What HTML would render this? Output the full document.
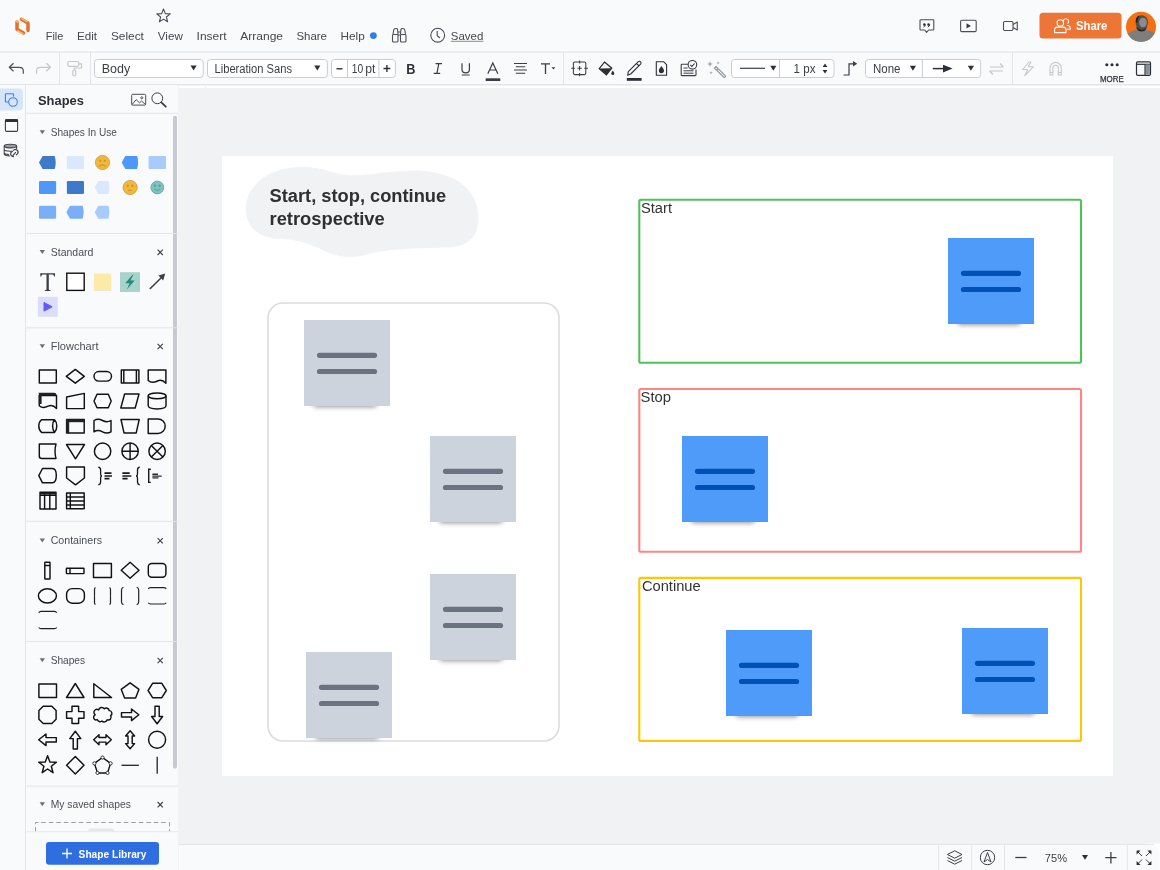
<!DOCTYPE html>
<html><head><meta charset="utf-8">
<style>
*{box-sizing:border-box;margin:0;padding:0}
html,body{width:1160px;height:870px;overflow:hidden;background:#f1f2f4;font-family:"Liberation Sans",sans-serif}
.a{position:absolute}
svg{position:absolute;left:0;top:0;will-change:transform}
text{font-family:"Liberation Sans",sans-serif}
</style></head><body>
<div class="a" style="left:0;top:0;width:1160px;height:85px;background:#f9fafb"></div>
<div class="a" style="left:0;top:51px;width:1160px;height:2px;background:#eceef1"></div>
<div class="a" style="left:0;top:84px;width:1160px;height:1px;background:#e3e5e8"></div>
<div class="a" style="left:59px;top:52px;width:1px;height:32px;background:#e3e5e8"></div>
<div class="a" style="left:90px;top:52px;width:1px;height:32px;background:#e3e5e8"></div>
<div class="a" style="left:563px;top:52px;width:1px;height:32px;background:#e3e5e8"></div>
<div class="a" style="left:1012px;top:52px;width:1px;height:32px;background:#e3e5e8"></div>
<div class="a" style="left:0;top:85px;width:178px;height:785px;background:#f9fafb"></div>
<div class="a" style="left:25px;top:85px;width:1px;height:785px;background:#e3e5e8"></div>
<div class="a" style="left:179px;top:86px;width:26px;height:2px;background:#fff"></div>
<div class="a" style="left:206px;top:86px;width:954px;height:2px;background:#fff"></div>
<div class="a" style="left:222px;top:156px;width:891px;height:620px;background:#fff"></div>
<div class="a" style="left:179px;top:844px;width:981px;height:26px;background:#f9fafb"></div>
<div class="a" style="left:179px;top:844px;width:981px;height:1px;background:#e3e5e8"></div>
<svg width="1160" height="870" viewBox="0 0 1160 870">
<defs><filter id="blur" x="-20%" y="-100%" width="140%" height="300%"><feGaussianBlur stdDeviation="2.4"/></filter></defs>
<path d="M300,167 C322,166 334,175 352,175.5 C372,175 395,170 418,170.5 C458,172 478.5,192 478.5,218 C478.5,238 466,247 448,247.5 C420,248 396,249 376,252 C358,258 342,259.5 325,251 C310,244 298,239.5 280,239 C258,238.5 245.8,226 245.8,209 C245.8,186 268,167.5 300,167 Z" fill="#f1f2f4"/>
<text x="269.5" y="202" font-size="18" fill="#2e3033" font-weight="bold" textLength="176.7" lengthAdjust="spacingAndGlyphs" >Start, stop, continue</text>
<text x="269.5" y="224.7" font-size="18" fill="#2e3033" font-weight="bold" textLength="115.3" lengthAdjust="spacingAndGlyphs" >retrospective</text>
<rect x="268" y="303" width="291" height="438" rx="15" fill="none" stroke="#dcdcdc" stroke-width="1.6"/>
<rect x="313" y="398" width="64" height="9" rx="4" fill="#000" opacity=".42" filter="url(#blur)"/>
<rect x="304" y="320" width="86" height="86" fill="#cdd3dc"/>
<path d="M319.5,355.3 H374.5 M319.5,371.5 H374.5" stroke="#6b7280" stroke-width="5.2" stroke-linecap="round"/>
<rect x="439" y="514" width="64" height="9" rx="4" fill="#000" opacity=".42" filter="url(#blur)"/>
<rect x="430" y="436" width="86" height="86" fill="#cdd3dc"/>
<path d="M445.5,471.3 H500.5 M445.5,487.5 H500.5" stroke="#6b7280" stroke-width="5.2" stroke-linecap="round"/>
<rect x="439" y="652" width="64" height="9" rx="4" fill="#000" opacity=".42" filter="url(#blur)"/>
<rect x="430" y="574" width="86" height="86" fill="#cdd3dc"/>
<path d="M445.5,609.3 H500.5 M445.5,625.5 H500.5" stroke="#6b7280" stroke-width="5.2" stroke-linecap="round"/>
<rect x="315" y="730" width="64" height="9" rx="4" fill="#000" opacity=".42" filter="url(#blur)"/>
<rect x="306" y="652" width="86" height="86" fill="#cdd3dc"/>
<path d="M321.5,687.3 H376.5 M321.5,703.5 H376.5" stroke="#6b7280" stroke-width="5.2" stroke-linecap="round"/>
<rect x="639.3" y="199.7" width="441.7" height="163" rx="1.5" fill="none" stroke="#4fc25a" stroke-width="2.1"/>
<rect x="639.3" y="389" width="441.7" height="162.7" rx="1.5" fill="none" stroke="#ff8585" stroke-width="2.1"/>
<rect x="639.3" y="577.9" width="441.7" height="163" rx="1.5" fill="none" stroke="#fcc803" stroke-width="2.1"/>
<text x="641" y="213.1" font-size="14" fill="#333333" font-weight="normal" textLength="31" lengthAdjust="spacingAndGlyphs" >Start</text>
<text x="640.6" y="402.2" font-size="14" fill="#333333" font-weight="normal" textLength="30.5" lengthAdjust="spacingAndGlyphs" >Stop</text>
<text x="641.9" y="590.7" font-size="14" fill="#333333" font-weight="normal" textLength="58.8" lengthAdjust="spacingAndGlyphs" >Continue</text>
<rect x="957" y="316" width="64" height="9" rx="4" fill="#000" opacity=".42" filter="url(#blur)"/>
<rect x="948" y="238" width="86" height="86" fill="#4e9bfa"/>
<path d="M963.5,273.3 H1018.5 M963.5,289.5 H1018.5" stroke="#0051b3" stroke-width="5.2" stroke-linecap="round"/>
<rect x="691" y="514" width="64" height="9" rx="4" fill="#000" opacity=".42" filter="url(#blur)"/>
<rect x="682" y="436" width="86" height="86" fill="#4e9bfa"/>
<path d="M697.5,471.3 H752.5 M697.5,487.5 H752.5" stroke="#0051b3" stroke-width="5.2" stroke-linecap="round"/>
<rect x="735" y="708" width="64" height="9" rx="4" fill="#000" opacity=".42" filter="url(#blur)"/>
<rect x="726" y="630" width="86" height="86" fill="#4e9bfa"/>
<path d="M741.5,665.3 H796.5 M741.5,681.5 H796.5" stroke="#0051b3" stroke-width="5.2" stroke-linecap="round"/>
<rect x="971" y="706" width="64" height="9" rx="4" fill="#000" opacity=".42" filter="url(#blur)"/>
<rect x="962" y="628" width="86" height="86" fill="#4e9bfa"/>
<path d="M977.5,663.3 H1032.5 M977.5,679.5 H1032.5" stroke="#0051b3" stroke-width="5.2" stroke-linecap="round"/>
<g fill="none" stroke-linecap="round" stroke-linejoin="round"><path d="M17,22 V29.3 L23.6,33" stroke="#e3702c" stroke-width="3.5"/><path d="M21.4,19.3 L28,23 V30.5" stroke="#e3702c" stroke-width="3.5"/><path d="M17.6,30.8 L22.8,33.6 M21.6,18.6 L27,21.6" stroke="#fbb56d" stroke-width="1.6"/><path d="M17,21.4 V22" stroke="#fbb56d" stroke-width="1.8"/></g>
<path d="M163.5,9 L165.3,13.6 L170.2,13.9 L166.4,17 L167.6,21.8 L163.5,19.1 L159.4,21.8 L160.6,17 L156.8,13.9 L161.7,13.6 Z" fill="none" stroke="#4a4e55" stroke-width="1.1" stroke-linejoin="round"/>
<text x="45.7" y="39.7" font-size="11.6" fill="#43474e" font-weight="normal" textLength="17.7" lengthAdjust="spacingAndGlyphs" >File</text>
<text x="77" y="39.7" font-size="11.6" fill="#43474e" font-weight="normal" textLength="20" lengthAdjust="spacingAndGlyphs" >Edit</text>
<text x="110.9" y="39.7" font-size="11.6" fill="#43474e" font-weight="normal" textLength="33" lengthAdjust="spacingAndGlyphs" >Select</text>
<text x="157.8" y="39.7" font-size="11.6" fill="#43474e" font-weight="normal" textLength="25" lengthAdjust="spacingAndGlyphs" >View</text>
<text x="196.6" y="39.7" font-size="11.6" fill="#43474e" font-weight="normal" textLength="30" lengthAdjust="spacingAndGlyphs" >Insert</text>
<text x="240.3" y="39.7" font-size="11.6" fill="#43474e" font-weight="normal" textLength="42.7" lengthAdjust="spacingAndGlyphs" >Arrange</text>
<text x="296.4" y="39.7" font-size="11.6" fill="#43474e" font-weight="normal" textLength="30.6" lengthAdjust="spacingAndGlyphs" >Share</text>
<text x="340.5" y="39.7" font-size="11.6" fill="#43474e" font-weight="normal" textLength="24.2" lengthAdjust="spacingAndGlyphs" >Help</text>
<circle cx="373.4" cy="35.6" r="3.4" fill="#2f7ef0"/>
<g fill="none" stroke="#4a4e55" stroke-width="1.1" stroke-linejoin="round"><rect x="392.5" y="34.5" width="5.5" height="7.5" rx="1"/><rect x="400.5" y="34.5" width="5.5" height="7.5" rx="1"/><path d="M393,34.5 L393.8,29.5 Q394.5,28.5 396,28.5 Q397.3,28.5 397.6,29.5 L398,34.5"/><path d="M400.5,34.5 L400.9,29.5 Q401.2,28.5 402.5,28.5 Q404,28.5 404.7,29.5 L405.5,34.5"/><path d="M398,32 L400.5,32 M398,35 L400.5,35"/></g>
<circle cx="437.7" cy="35.2" r="6.9" fill="none" stroke="#4a4e55" stroke-width="1.1"/><path d="M437.2,31 L437.2,35.8 L440,38" fill="none" stroke="#4a4e55" stroke-width="1.1"/>
<text x="450.8" y="39.6" font-size="11.6" fill="#43474e" font-weight="normal" textLength="32.6" lengthAdjust="spacingAndGlyphs" >Saved</text>
<rect x="450.8" y="40.8" width="32.6" height="1" fill="#8a8e95"/>
<path d="M920.8,19.8 H933 Q933.8,19.8 933.8,20.6 V29.2 Q933.8,30 933,30 H928.6 L926.6,32.4 L924.6,30 H920.8 Q920,30 920,29.2 V20.6 Q920,19.8 920.8,19.8 Z" fill="none" stroke="#4a4e55" stroke-width="1.1" stroke-linejoin="round"/><g fill="#2c3036"><circle cx="924.3" cy="24.4" r="1.25"/><circle cx="928.5" cy="24.4" r="1.25"/></g><path d="M925.4,24.6 Q925.3,26.3 923.6,27.1 M929.6,24.6 Q929.5,26.3 927.8,27.1" fill="none" stroke="#2c3036" stroke-width="1"/>
<rect x="960.6" y="20.2" width="15.6" height="11.4" rx="1.2" fill="none" stroke="#4a4e55" stroke-width="1.1"/><path d="M966.5,23.3 L971,25.9 L966.5,28.5 Z" fill="#3a3e45"/>
<rect x="1003.5" y="21.5" width="9.5" height="9" rx="1.2" fill="none" stroke="#4a4e55" stroke-width="1.1"/><path d="M1013,24.5 L1017.3,22 V30 L1013,27.5" fill="none" stroke="#4a4e55" stroke-width="1.1" stroke-linejoin="round"/>
<rect x="1039.5" y="12.8" width="82" height="25.8" rx="3.5" fill="#ed7535"/>
<g fill="none" stroke="#fff" stroke-width="1.05"><path d="M1063.2,21.2 A2.7,2.7 0 1 1 1067.6,23.6 M1066.8,25.4 H1067.5 Q1070.2,25.4 1070.2,28 V29.3 H1066.6"/><circle cx="1060.3" cy="22.9" r="3.2" fill="#ed7535"/><path d="M1054.6,32.6 V30 Q1054.6,27.1 1057.5,27.1 H1063.2 Q1066,27.1 1066,30 V32.6 Z" fill="#ed7535"/></g>
<text x="1076" y="30.1" font-size="13" fill="#ffffff" font-weight="bold" textLength="31.4" lengthAdjust="spacingAndGlyphs" >Share</text>
<defs><clipPath id="av"><circle cx="1141" cy="26.8" r="15"/></clipPath><filter id="ab"><feGaussianBlur stdDeviation=".7"/></filter></defs><g clip-path="url(#av)"><rect x="1120" y="8" width="40" height="40" fill="#f66f12"/><g filter="url(#ab)"><path d="M1125,34.5 L1135,30 Q1141,28.5 1147,30 L1157,33.5 V46 H1125 Z" fill="#7e7e7e"/><ellipse cx="1141.5" cy="27.5" rx="5" ry="4" fill="#262626"/><ellipse cx="1141.8" cy="22.5" rx="6.2" ry="7.3" fill="#505050"/><ellipse cx="1143" cy="22.5" rx="3.8" ry="4.8" fill="#8c8c8c"/><path d="M1135.8,22 Q1135.5,16 1140,15.5 Q1137.5,17.5 1137.3,23 Z" fill="#1e1e1e"/></g></g>
<path d="M23.3,73.8 V71 Q23.3,67.3 19.5,67.3 H9.5 M13.5,63.3 L9.3,67.3 L13.5,71.3" fill="none" stroke="#4a4e55" stroke-width="1.2" stroke-linejoin="round"/>
<path d="M36.5,73.8 V71 Q36.5,67.3 40.3,67.3 H50.3 M46.3,63.3 L50.5,67.3 L46.3,71.3" fill="none" stroke="#c4c7cc" stroke-width="1.2" stroke-linejoin="round"/>
<g fill="none" stroke="#c4c7cc" stroke-width="1.2"><rect x="67.8" y="61.5" width="11" height="4.8" rx="1.5"/><path d="M78.8,63.8 H81.5 V68 H74.3 V70"/><rect x="72.8" y="70" width="3" height="5.8" rx="1.2"/></g>
<rect x="94.5" y="59.5" width="108.7" height="18" rx="3" fill="#fff" stroke="#c9cdd3"/>
<text x="101.7" y="73" font-size="12.5" fill="#3a3e45" font-weight="normal" >Body</text>
<path d="M190.5,65.5 H196.7 L193.6,70.5 Z" fill="#2c3036"/>
<rect x="207.5" y="59.5" width="119.9" height="18" rx="3" fill="#fff" stroke="#c9cdd3"/>
<text x="214.5" y="72.5" font-size="12" fill="#3a3e45" font-weight="normal" textLength="77.5" lengthAdjust="spacingAndGlyphs" >Liberation Sans</text>
<path d="M314.2,65.5 H320.4 L317.3,70.5 Z" fill="#2c3036"/>
<rect x="331.5" y="59.5" width="63.9" height="18" rx="3" fill="#fff" stroke="#c9cdd3"/>
<path d="M347.5,59.5 V77.5 M378.9,59.5 V77.5" stroke="#c9cdd3"/>
<path d="M336.5,68.8 H342.5" stroke="#2c3036" stroke-width="1.4"/>
<text x="351.7" y="72.8" font-size="12.5" fill="#3a3e45" font-weight="normal" textLength="11.4" lengthAdjust="spacingAndGlyphs" >10</text>
<text x="365.2" y="72.8" font-size="12.5" fill="#3a3e45" font-weight="normal" textLength="10.2" lengthAdjust="spacingAndGlyphs" >pt</text>
<path d="M383.5,68.5 H390.3 M386.9,65.1 V71.9" stroke="#2c3036" stroke-width="1.4"/>
<text x="406.3" y="73.8" font-size="14.5" fill="#2f3339" font-weight="bold" textLength="9.2" lengthAdjust="spacingAndGlyphs" >B</text>
<path d="M435.5,63.6 H442 M433.7,73.4 H440.2 M438.8,63.6 L436.9,73.4" fill="none" stroke="#3a3e45" stroke-width="1.2"/>
<path d="M462,63.3 V69.5 Q462,72.8 465.7,72.8 Q469.4,72.8 469.4,69.5 V63.3 M461.8,75 H469.6" fill="none" stroke="#3a3e45" stroke-width="1.2"/>
<path d="M487.8,73.8 L492.8,63 L497.8,73.8 M489.6,70 H496" fill="none" stroke="#3a3e45" stroke-width="1.2"/>
<rect x="485.7" y="78.3" width="14.6" height="2.7" fill="#3a3e45"/>
<path d="M514,63.5 H527 M515.8,66.8 H525.2 M514,70 H527 M515.8,73.2 H525.2" stroke="#3a3e45" stroke-width="1.1"/>
<path d="M541,63.8 H550 M545.5,63.8 V74" stroke="#3a3e45" stroke-width="1.3" fill="none"/><path d="M551.5,67.2 H555.3 L553.4,69.4 Z" fill="#3a3e45"/>
<g fill="none" stroke="#3a3e45" stroke-width="1.05"><rect x="573.4" y="62" width="12.4" height="12.6" rx="1.3"/><path d="M579.6,60.4 V63.6 M579.6,73 V76.2 M571.2,68.3 H575 M584.2,68.3 H588 M577.4,68.3 H581.8 M579.6,66.1 V70.5"/></g>
<path d="M604.5,62 L611.8,68.2 L606.4,74.8 L599.2,68.6 Z" fill="none" stroke="#2c3036" stroke-width="1.2"/><path d="M599.3,68.6 L611.7,68.3 L606.4,74.8 Z" fill="#2c3036"/><path d="M612.8,70.5 Q614.3,72.5 614.3,73.4 A1.5,1.5 0 0 1 611.3,73.4 Q611.3,72.5 612.8,70.5 Z" fill="#2c3036"/><rect x="599.5" y="78" width="14" height="2.6" fill="#ffffff"/>
<path d="M627.7,75.3 L628.3,71.6 L638.3,61.6 Q639.5,60.8 640.6,61.9 Q641.5,63 640.6,64.1 L630.7,74 Z M636.6,63.5 L639,65.8" fill="none" stroke="#2c3036" stroke-width="1.1" stroke-linejoin="round"/><rect x="626.8" y="78" width="14.8" height="2.8" fill="#2c3036"/>
<path d="M656.3,61.8 H663.8 L666.6,64.6 V75.3 H656.3 Z" fill="none" stroke="#2c3036" stroke-width="1.1" stroke-linejoin="round"/><path d="M661.4,66 Q664,69.2 664,70.6 A2.6,2.6 0 0 1 658.8,70.6 Q658.8,69.2 661.4,66 Z" fill="#2c3036"/>
<path d="M689,64.2 H682 Q681.2,64.2 681.2,65 V75 Q681.2,75.6 682,75.6 H695.2 Q696,75.6 696,74.8 V69.5" fill="none" stroke="#3a3e45" stroke-width="1.1"/><path d="M683.5,68 H687.5 M683.5,70.8 H693.5 M683.5,73.2 H693.5" stroke="#3a3e45" stroke-width="1"/><circle cx="692.4" cy="64.8" r="4.3" fill="#f9fafb" stroke="#3a3e45" stroke-width="1.1"/><path d="M690.3,64.9 L691.9,66.4 L694.6,63.5" fill="none" stroke="#3a3e45" stroke-width="1.1"/>
<path d="M714.5,68.2 L723.6,77 Q724.6,77.7 725.2,77 Q725.8,76.2 725,75.4 L716,66.5 Z M716.8,70 L718.4,68.4" fill="none" stroke="#8c9097" stroke-width="1.1"/><path d="M710,61 L710.8,63.2 L713,64 L710.8,64.8 L710,67 L709.2,64.8 L707,64 L709.2,63.2 Z M718,61.3 L718.5,62.5 L719.7,63 L718.5,63.5 L718,64.7 L717.5,63.5 L716.3,63 L717.5,62.5 Z M711,71 L711.5,72.3 L712.8,72.8 L711.5,73.3 L711,74.6 L710.5,73.3 L709.2,72.8 L710.5,72.3 Z" fill="#a3a7ad"/>
<rect x="731.5" y="59.5" width="102.5" height="18" rx="3" fill="#fff" stroke="#c9cdd3"/>
<path d="M779.5,59.5 V77.5" stroke="#c9cdd3"/>
<path d="M740,68.3 H765" stroke="#3a3e45" stroke-width="1.2"/>
<path d="M770.2,65.8 H776.4 L773.3,70.8 Z" fill="#2c3036"/>
<text x="793.6" y="73" font-size="12.5" fill="#3a3e45" font-weight="normal" textLength="21.9" lengthAdjust="spacingAndGlyphs" >1 px</text>
<path d="M822.6,67 L825,63.6 L827.4,67 Z M822.6,70 L825,73.4 L827.4,70 Z" fill="#2c3036"/>
<path d="M843.5,75 H849 V63.8 H853.5" fill="none" stroke="#3a3e45" stroke-width="1.2"/><path d="M853,61 L857.2,63.8 L853,66.6 Z" fill="#3a3e45"/>
<rect x="865.5" y="59.5" width="115.2" height="18" rx="3" fill="#fff" stroke="#c9cdd3"/>
<path d="M922.4,59.5 V77.5" stroke="#c9cdd3"/>
<text x="873" y="73" font-size="12.5" fill="#3a3e45" font-weight="normal" textLength="27.5" lengthAdjust="spacingAndGlyphs" >None</text>
<path d="M909.8,65.8 H916 L912.9,70.8 Z" fill="#2c3036"/>
<path d="M932.8,68.6 H945" stroke="#2c3036" stroke-width="1.5"/><path d="M943,64.8 L952.6,68.6 L943,72.4 Z" fill="#2c3036"/>
<path d="M967.8,65.8 H974 L970.9,70.8 Z" fill="#2c3036"/>
<path d="M990,67 H1003.5 M1000,63.5 L1003.5,67 M1003,71 H989.5 M993,74.5 L989.5,71" fill="none" stroke="#c4c7cc" stroke-width="1.1"/>
<path d="M1029.5,61.5 L1022.6,69.5 H1027.6 L1024.8,75.7 L1033.3,66.8 H1028.3 L1031,61.5" fill="none" stroke="#c4c7cc" stroke-width="1.1" stroke-linejoin="round"/>
<path d="M1050,75 V68 A5.6,5.6 0 0 1 1061.2,68 V75 H1058.3 V68 A2.7,2.7 0 0 0 1052.9,68 V75 Z M1050,72.5 H1052.9 M1058.3,72.5 H1061.2" fill="none" stroke="#c4c7cc" stroke-width="1.1"/>
<circle cx="1106.8" cy="64.8" r="1.55" fill="#2c3036"/><circle cx="1112" cy="64.8" r="1.55" fill="#2c3036"/><circle cx="1117.2" cy="64.8" r="1.55" fill="#2c3036"/>
<text x="1100" y="81.5" font-size="8.5" fill="#2f3338" font-weight="normal" textLength="23.8" lengthAdjust="spacingAndGlyphs" stroke="#2f3338" stroke-width=".25">MORE</text>
<rect x="1136.5" y="61.8" width="14" height="13.5" rx="1.3" fill="none" stroke="#2c3036" stroke-width="1.2"/><path d="M1136.5,64.3 H1150.5" stroke="#2c3036" stroke-width="1.2"/><rect x="1145.3" y="64.5" width="4.6" height="10.2" fill="#8c9097"/><path d="M1145,64.3 V75.3" stroke="#2c3036" stroke-width="1.1"/>
<rect x="-6" y="88.4" width="29" height="22.2" rx="4" fill="#d5e5fc"/>
<g fill="none" stroke="#3f7ee8" stroke-width="1.1"><path d="M13.5,96.5 V94.5 Q13.5,93.7 12.7,93.7 H6.2 Q5.4,93.7 5.4,94.5 V101.3 Q5.4,102 6.2,102 H8.5"/><circle cx="13" cy="102" r="4.3"/></g>
<rect x="5.4" y="119.6" width="12.2" height="11.8" rx="1.2" fill="none" stroke="#3a3e45" stroke-width="1.1"/>
<rect x="5.2" y="119.4" width="12.6" height="2.6" fill="#2c3036"/>
<g fill="none" stroke="#3f434a" stroke-width="1.1"><ellipse cx="10.4" cy="146.1" rx="6.2" ry="1.8" fill="#9a9da3"/><path d="M4.2,146.1 V154 Q4.2,155.8 10,156 M16.6,146.1 V149 M4.2,149.6 Q4.2,151.3 10.4,151.3 Q11.5,151.3 12.3,151.2 M4.2,152.8 Q4.2,154.4 9,154.6"/><path d="M13.2,150.8 A2.6,2.6 0 0 1 17.6,153.6 L16,155.2 M13.9,156.4 A2.6,2.6 0 0 1 11,152.5 L12.6,151 M12.8,155.6 L15.8,152.2" stroke-width="1.2"/></g>
<text x="38" y="105.2" font-size="13" fill="#2c3036" font-weight="bold" textLength="45.9" lengthAdjust="spacingAndGlyphs" >Shapes</text>
<g fill="none" stroke="#4a4e55" stroke-width="1"><rect x="131.7" y="94.3" width="14" height="10.8" rx="1"/><path d="M132,104.5 L136.2,99.7 L139.5,102.8 L141.5,101 L145.5,104.5"/><circle cx="141.8" cy="97.8" r="1"/></g>
<circle cx="157.3" cy="98.3" r="5.4" fill="none" stroke="#3a3e45" stroke-width="1"/><path d="M161.3,102.4 L165.8,106.7" stroke="#3a3e45" stroke-width="1.8" stroke-linecap="round"/>
<rect x="26" y="112.8" width="152" height="1" fill="#e3e5e8"/>
<rect x="173" y="115.7" width="4" height="653" rx="2" fill="#c6c9cf"/>
<path d="M39.6,130.2 H45 L42.3,134.2 Z" fill="#6c717a"/>
<text x="50.7" y="136.2" font-size="11" fill="#4a4f57" font-weight="normal" textLength="66.2" lengthAdjust="spacingAndGlyphs" >Shapes In Use</text>
<path d="M42.6,156 H54.7 Q56.7,162.5 54.7,169 H42.6 L39,162.5 Z" fill="#3f79c9"/>
<rect x="66.9" y="156" width="17.099999999999994" height="13" rx="1.2" fill="#d9e8fd"/>
<circle cx="102.5" cy="162.5" r="7.1" fill="#f2b83c" stroke="#c48d30" stroke-width=".7"/><circle cx="100.2" cy="160.7" r="1.25" fill="#c48d30" opacity=".75"/><circle cx="104.8" cy="160.7" r="1.25" fill="#c48d30" opacity=".75"/><path d="M99.2,166.5 Q102.5,163.3 105.8,166.5" fill="none" stroke="#c48d30" stroke-width="1.1" opacity=".85"/>
<path d="M125.3,156 H137.1 Q139.1,162.5 137.1,169 H125.3 L121.7,162.5 Z" fill="#4f97f9"/>
<rect x="148.6" y="156" width="17.400000000000006" height="13" rx="1.2" fill="#a9cbfc"/>
<rect x="39" y="181" width="17.1" height="13" rx="1.2" fill="#4f97f9"/>
<rect x="66.9" y="181" width="17.099999999999994" height="13" rx="1.2" fill="#3f79c9"/>
<path d="M98.3,181 H108.39999999999999 Q110.39999999999999,187.5 108.39999999999999,194 H98.3 L94.7,187.5 Z" fill="#d9e8fd"/>
<circle cx="130.1" cy="187.5" r="7.1" fill="#f2b83c" stroke="#c48d30" stroke-width=".7"/><circle cx="127.8" cy="185.7" r="1.25" fill="#c48d30" opacity=".75"/><circle cx="132.4" cy="185.7" r="1.25" fill="#c48d30" opacity=".75"/><path d="M128.1,190.3 H132.1" stroke="#c48d30" stroke-width="1.1" opacity=".85"/>
<circle cx="157.3" cy="187.5" r="6.4" fill="#7ec4be" stroke="#4c9890" stroke-width=".7"/><circle cx="155.0" cy="185.7" r="1.25" fill="#4c9890" opacity=".75"/><circle cx="159.60000000000002" cy="185.7" r="1.25" fill="#4c9890" opacity=".75"/><path d="M154.3,189.1 Q157.3,192.1 160.3,189.1" fill="none" stroke="#4c9890" stroke-width="1" opacity=".85"/>
<rect x="39" y="205.8" width="17.1" height="12.899999999999977" rx="1.2" fill="#7aaef6"/>
<path d="M70.0,205.8 H82.6 Q84.6,212.25 82.6,218.7 H70.0 L66.4,212.25 Z" fill="#7aaef6"/>
<path d="M98.3,205.8 H108.39999999999999 Q110.39999999999999,212.25 108.39999999999999,218.7 H98.3 L94.7,212.25 Z" fill="#a9cbfc"/>
<rect x="26" y="232.9" width="152" height="1" fill="#e3e5e8"/>
<path d="M39.6,250 H45 L42.3,254 Z" fill="#6c717a"/>
<text x="50.7" y="256" font-size="11" fill="#4a4f57" font-weight="normal" textLength="42.7" lengthAdjust="spacingAndGlyphs" >Standard</text>
<path d="M157.6,249.7 L162.8,255 M162.8,249.7 L157.6,255" stroke="#3a3e45" stroke-width="1.1"/>
<path d="M40.3,273.2 H55 V276.5 H54.2 Q53.8,274.5 52.5,274.5 H48.8 V289.5 Q48.8,290.2 50.5,290.2 V291 H44.8 V290.2 Q46.5,290.2 46.5,289.5 V274.5 H42.8 Q41.5,274.5 41.1,276.5 H40.3 Z" fill="#3a3e45"/>
<rect x="66.8" y="273.2" width="17.4" height="17.2" fill="#fff" stroke="#111" stroke-width="1.4"/>
<rect x="94" y="275" width="17" height="16" fill="#e8dcae" opacity=".6"/><rect x="93.9" y="273.5" width="17.2" height="16.6" fill="#fde9a8"/>
<rect x="120" y="272.2" width="20" height="19.8" fill="#a7d3cb"/><path d="M132.6,274.8 L125.2,283.2 H129.6 L126.8,289.6 L134.6,280.6 H130.4 L133.4,274.8 Z" fill="#1f8b79"/>
<path d="M149.8,289 L162,277" stroke="#3a4149" stroke-width="1.6"/><path d="M165.2,273.6 L158.4,275.6 L163.2,280.4 Z" fill="#3a4149"/>
<rect x="37.9" y="296.8" width="19.8" height="20" fill="#dcdcfc"/><path d="M44,302.5 L52.2,306.8 L44,311.1 Z" fill="#6558f5" stroke="#6558f5" stroke-width="1" stroke-linejoin="round"/>
<rect x="26" y="327.3" width="152" height="1" fill="#e3e5e8"/>
<path d="M39.6,344.2 H45 L42.3,348.2 Z" fill="#6c717a"/>
<text x="50.7" y="350.2" font-size="11" fill="#4a4f57" font-weight="normal" textLength="47.8" lengthAdjust="spacingAndGlyphs" >Flowchart</text>
<path d="M157.6,343.9 L162.8,349.2 M162.8,343.9 L157.6,349.2" stroke="#3a3e45" stroke-width="1.1"/>
<rect x="39.3" y="370" width="17" height="13" fill="none" stroke="#111215" stroke-width="1.45" stroke-linejoin="round"/>
<path d="M75.3,369.4 L84.3,376.3 L75.3,383.2 L66.3,376.3 Z" fill="none" stroke="#111215" stroke-width="1.45" stroke-linejoin="round"/>
<rect x="94" y="371.5" width="17.5" height="9.6" rx="4.8" fill="none" stroke="#111215" stroke-width="1.45" stroke-linejoin="round"/>
<rect x="121.3" y="370" width="17.6" height="13" fill="none" stroke="#111215" stroke-width="1.45" stroke-linejoin="round"/><path d="M123.8,370 V383 M136.4,370 V383" fill="none" stroke="#111215" stroke-width="1.45" stroke-linejoin="round"/>
<path d="M148.2,370 H165.9 V383.3 C163,380 160.5,379.5 157.5,381 C154.5,382.5 151,383.2 148.2,380.5 Z" fill="none" stroke="#111215" stroke-width="1.45" stroke-linejoin="round"/>
<path d="M39.3,395.5 H56.5 V408.5 C53.6,405.2 51.1,404.7 48.1,406.2 C45.1,407.7 42.1,408.3 39.3,405.7 Z" fill="none" stroke="#111215" stroke-width="1.45" stroke-linejoin="round"/><path d="M38.8,392.8 H54 Q56.5,392.8 56.5,395.2 H41.6 V404 L38.8,404 Z" fill="#1e2126"/>
<path d="M66.6,397 L84.3,393.4 V408.6 H66.6 Z" fill="none" stroke="#111215" stroke-width="1.45" stroke-linejoin="round"/>
<path d="M97,394.3 H108.3 L111.2,401 L108.3,407.7 H97 L94,401 Z" fill="none" stroke="#111215" stroke-width="1.45" stroke-linejoin="round"/>
<path d="M124.6,394 H139 L135.2,408 H120.8 Z" fill="none" stroke="#111215" stroke-width="1.45" stroke-linejoin="round"/>
<path d="M148.2,395.8 V405.6 Q148.2,409 157.1,409 Q166,409 166,405.6 V395.8" fill="none" stroke="#111215" stroke-width="1.45" stroke-linejoin="round"/><ellipse cx="157.1" cy="395.8" rx="8.9" ry="2.9" fill="none" stroke="#111215" stroke-width="1.45" stroke-linejoin="round"/>
<path d="M41.5,419.8 H54.5 Q56.8,422 56.8,426.1 Q56.8,430.2 54.5,432.4 H41.5 Q38.8,430.2 38.8,426.1 Q38.8,422 41.5,419.8 Z M54.5,419.8 Q52.6,422 52.6,426.1 Q52.6,430.2 54.5,432.4" fill="none" stroke="#111215" stroke-width="1.45" stroke-linejoin="round"/>
<rect x="66.6" y="419.5" width="17.6" height="13.4" fill="none" stroke="#111215" stroke-width="1.45" stroke-linejoin="round"/><rect x="66.2" y="419.2" width="18.4" height="3" fill="#1e2126"/><rect x="66.2" y="419.2" width="3" height="14" fill="#1e2126"/>
<path d="M94,420.5 Q98,418 102.5,420.5 Q107,423 111,420.5 V431.8 Q107,434.3 102.5,431.8 Q98,429.3 94,431.8 Z" fill="none" stroke="#111215" stroke-width="1.45" stroke-linejoin="round"/>
<path d="M121,419.5 H139.2 L136.2,432.9 H124 Z" fill="none" stroke="#111215" stroke-width="1.45" stroke-linejoin="round"/>
<path d="M148.2,419 H158 A7.2,7.2 0 0 1 158,433.4 H148.2 Z" fill="none" stroke="#111215" stroke-width="1.45" stroke-linejoin="round"/>
<path d="M39.3,444 H56 Q54,451.2 56,458.4 H41.8 Q39.3,458.4 39.3,455.9 Z" fill="none" stroke="#111215" stroke-width="1.45" stroke-linejoin="round"/>
<path d="M66.5,444.5 H84.5 L75.5,458.8 Z" fill="none" stroke="#111215" stroke-width="1.45" stroke-linejoin="round"/>
<circle cx="102.6" cy="451.3" r="8.2" fill="none" stroke="#111215" stroke-width="1.45" stroke-linejoin="round"/>
<circle cx="130.1" cy="451.3" r="8.2" fill="none" stroke="#111215" stroke-width="1.45" stroke-linejoin="round"/><path d="M130.1,443.1 V459.5 M121.9,451.3 H138.3" fill="none" stroke="#111215" stroke-width="1.45" stroke-linejoin="round"/>
<circle cx="157.1" cy="451.3" r="8.2" fill="none" stroke="#111215" stroke-width="1.45" stroke-linejoin="round"/><path d="M151.3,445.5 L162.9,457.1 M162.9,445.5 L151.3,457.1" fill="none" stroke="#111215" stroke-width="1.45" stroke-linejoin="round"/>
<path d="M42.5,468.5 H52.5 Q56.3,468.5 56.3,475.6 Q56.3,482.8 52.5,482.8 H42.5 L38.8,475.6 Z" fill="none" stroke="#111215" stroke-width="1.45" stroke-linejoin="round"/>
<path d="M66.6,467 H84.4 V478 L75.5,484.8 L66.6,478 Z" fill="none" stroke="#111215" stroke-width="1.45" stroke-linejoin="round"/>
<path d="M98.3,467.2 Q100.6,467.5 100.6,470 V474 Q100.6,476 102,476 Q100.6,476 100.6,478 V482 Q100.6,484.5 98.3,484.8" fill="none" stroke="#16181c" stroke-width="1.3"/><path d="M104.5,473.2 H111.5 M104.5,476 H112 M104.5,478.6 H109.5" stroke="#16181c" stroke-width="1.7"/>
<path d="M139.8,467.2 Q137.5,467.5 137.5,470 V474 Q137.5,476 136,476 Q137.5,476 137.5,478 V482 Q137.5,484.5 139.8,484.8" fill="none" stroke="#16181c" stroke-width="1.3"/><path d="M122.4,473.2 H129.7 M122.4,476 H131.4 M122.4,478.6 H127.6" stroke="#16181c" stroke-width="1.7"/>
<path d="M150.8,469.2 H148.7 V482.4 H150.8" fill="none" stroke="#16181c" stroke-width="1.4"/><path d="M152.4,474.3 H158 M152.4,476.1 H161.7 M152.4,477.9 H158.5" stroke="#2a2d32" stroke-width="1.4"/>
<rect x="40" y="492.3" width="16" height="16.6" fill="none" stroke="#111215" stroke-width="1.45" stroke-linejoin="round"/><path d="M40,495.2 H56 M44.6,492.3 V508.9 M49.8,492.3 V508.9" fill="none" stroke="#111215" stroke-width="1.45" stroke-linejoin="round"/><path d="M40,493.7 H56" stroke="#1e2126" stroke-width="1.6"/>
<rect x="66.6" y="493" width="17.6" height="15.8" fill="none" stroke="#111215" stroke-width="1.45" stroke-linejoin="round"/><path d="M66.6,497 H84.2 M66.6,501 H84.2 M66.6,505 H84.2 M70.3,493 V508.8" fill="none" stroke="#111215" stroke-width="1.45" stroke-linejoin="round"/>
<rect x="26" y="520.8" width="152" height="1" fill="#e3e5e8"/>
<path d="M39.6,538.4 H45 L42.3,542.4 Z" fill="#6c717a"/>
<text x="50.7" y="544.4" font-size="11" fill="#4a4f57" font-weight="normal" textLength="51.3" lengthAdjust="spacingAndGlyphs" >Containers</text>
<path d="M157.6,538.1 L162.8,543.4 M162.8,538.1 L157.6,543.4" stroke="#3a3e45" stroke-width="1.1"/>
<rect x="44.8" y="562.2" width="5.2" height="16.8" rx=".5" fill="none" stroke="#111215" stroke-width="1.45" stroke-linejoin="round"/><path d="M44.8,565.5 H50" fill="none" stroke="#111215" stroke-width="1.45" stroke-linejoin="round"/>
<rect x="66.4" y="568.2" width="17.6" height="5.4" rx=".5" fill="none" stroke="#111215" stroke-width="1.45" stroke-linejoin="round"/><path d="M70,568.2 V573.6" fill="none" stroke="#111215" stroke-width="1.45" stroke-linejoin="round"/>
<rect x="93.5" y="563.4" width="17.9" height="14" fill="none" stroke="#111215" stroke-width="1.45" stroke-linejoin="round"/>
<path d="M130.1,562.3 L139,570.3 L130.1,578.3 L121.2,570.3 Z" fill="none" stroke="#111215" stroke-width="1.45" stroke-linejoin="round"/>
<rect x="148.3" y="563.4" width="17.6" height="13.8" rx="3.5" fill="none" stroke="#111215" stroke-width="1.45" stroke-linejoin="round"/>
<ellipse cx="47.4" cy="595.9" rx="9" ry="7.1" fill="none" stroke="#111215" stroke-width="1.45" stroke-linejoin="round"/>
<rect x="66.6" y="588.6" width="17.8" height="14.6" rx="5.5" fill="none" stroke="#111215" stroke-width="1.45" stroke-linejoin="round"/>
<path d="M95.5,587.5 Q94.5,588 94.5,589.5 V595.5 Q94.5,596 94,596 Q94.5,596 94.5,596.5 V603 Q94.5,604 95.5,604.5 M109.5,587.5 Q110.5,588 110.5,589.5 V595.5 Q110.5,596 111,596 Q110.5,596 110.5,596.5 V603 Q110.5,604 109.5,604.5" fill="none" stroke="#1e2126" stroke-width="1.2"/>
<path d="M123.5,587.3 Q121.5,588 121.5,590 V602 Q121.5,604 123.5,604.7 M136.7,587.3 Q138.7,588 138.7,590 V602 Q138.7,604 136.7,604.7" fill="none" stroke="#1e2126" stroke-width="1.2"/>
<path d="M148.3,588.9 Q149,587.6 150.5,587.6 H164 Q165.5,587.6 166.2,588.9 M148.3,602.8 Q149,604 150.5,604 H164 Q165.5,604 166.2,602.8" fill="none" stroke="#1e2126" stroke-width="1.2"/>
<path d="M38.8,612.7 Q39.5,611.4 41,611.4 H54.5 Q56,611.4 56.7,612.7 M38.8,627.5 Q39.5,628.7 41,628.7 H54.5 Q56,628.7 56.7,627.5" fill="none" stroke="#1e2126" stroke-width="1.2"/>
<rect x="26" y="641" width="152" height="1" fill="#e3e5e8"/>
<path d="M39.6,658.2 H45 L42.3,662.2 Z" fill="#6c717a"/>
<text x="50.7" y="664.2" font-size="11" fill="#4a4f57" font-weight="normal" textLength="34.4" lengthAdjust="spacingAndGlyphs" >Shapes</text>
<path d="M157.6,657.9000000000001 L162.8,663.2 M162.8,657.9000000000001 L157.6,663.2" stroke="#3a3e45" stroke-width="1.1"/>
<rect x="38.9" y="684" width="17.6" height="13.5" fill="none" stroke="#111215" stroke-width="1.45" stroke-linejoin="round"/>
<path d="M75.3,683.5 L84,697.5 H66.5 Z" fill="none" stroke="#111215" stroke-width="1.45" stroke-linejoin="round"/>
<path d="M93.8,683.8 L111.5,697.5 H93.8 Z" fill="none" stroke="#111215" stroke-width="1.45" stroke-linejoin="round"/>
<path d="M130.1,682.8 L139,689.3 L135.6,698 H124.6 L121.2,689.3 Z" fill="none" stroke="#111215" stroke-width="1.45" stroke-linejoin="round"/>
<path d="M152.6,683.3 H161.8 L166.3,690.5 L161.8,697.7 H152.6 L148.1,690.5 Z" fill="none" stroke="#111215" stroke-width="1.45" stroke-linejoin="round"/>
<path d="M43.2,706.3 H51.8 L56.1,710.6 V719.2 L51.8,723.5 H43.2 L38.9,719.2 V710.6 Z" fill="none" stroke="#111215" stroke-width="1.45" stroke-linejoin="round"/>
<path d="M72,706.3 H78.6 V711.6 H84 V718.2 H78.6 V723.5 H72 V718.2 H66.6 V711.6 H72 Z" fill="none" stroke="#111215" stroke-width="1.45" stroke-linejoin="round"/>
<path d="M97.2,719.6 A2.6,2.6 0 0 1 95.2,714.8 A2.8,2.8 0 0 1 98.6,710 A3.2,3.2 0 0 1 104.3,708.8 A3,3 0 0 1 109.2,710.6 A2.7,2.7 0 0 1 110.6,715.6 A2.8,2.8 0 0 1 107.2,719.8 A3.2,3.2 0 0 1 101.9,721 A3,3 0 0 1 97.2,719.6 Z" fill="none" stroke="#111215" stroke-width="1.45" stroke-linejoin="round"/>
<path d="M121.5,712.6 H131.5 V709 L138.8,714.8 L131.5,720.6 V717 H121.5 Z" fill="none" stroke="#111215" stroke-width="1.45" stroke-linejoin="round"/>
<path d="M155,706.3 H159.2 V716.5 H162.6 L157.1,723.8 L151.6,716.5 H155 Z" fill="none" stroke="#111215" stroke-width="1.45" stroke-linejoin="round"/>
<path d="M56.3,737.6 H46 V734 L38.7,739.8 L46,745.6 V742 H56.3 Z" fill="none" stroke="#111215" stroke-width="1.45" stroke-linejoin="round"/>
<path d="M73.2,749 V738.6 H69.8 L75.3,731.3 L80.8,738.6 H77.4 V749 Z" fill="none" stroke="#111215" stroke-width="1.45" stroke-linejoin="round"/>
<path d="M93.7,739.8 L99,734.8 V737.5 H106 V734.8 L111.3,739.8 L106,744.8 V742.1 H99 V744.8 Z" fill="none" stroke="#111215" stroke-width="1.45" stroke-linejoin="round"/>
<path d="M130.1,730.8 L134.6,736 H132.2 V743.6 H134.6 L130.1,748.8 L125.6,743.6 H128 V736 H125.6 Z" fill="none" stroke="#111215" stroke-width="1.45" stroke-linejoin="round"/>
<circle cx="157.1" cy="739.8" r="8.5" fill="none" stroke="#111215" stroke-width="1.45" stroke-linejoin="round"/>
<path d="M47.6,755.8 L49.9,762 L56.4,762.3 L51.3,766.3 L53,772.7 L47.6,769 L42.2,772.7 L43.9,766.3 L38.8,762.3 L45.3,762 Z" fill="none" stroke="#111215" stroke-width="1.45" stroke-linejoin="round"/>
<path d="M75.3,756.5 L84,765.2 L75.3,773.9 L66.6,765.2 Z" fill="none" stroke="#111215" stroke-width="1.45" stroke-linejoin="round"/>
<path d="M102.5,757.5 L110.6,763.4 L107.5,772.9 H97.5 L94.4,763.4 Z" fill="none" stroke="#111215" stroke-width="1.45" stroke-linejoin="round"/>
<circle cx="102.5" cy="757.5" r="1.6" fill="#fff" stroke="#1e2126" stroke-width=".9"/><circle cx="110.6" cy="763.4" r="1.6" fill="#fff" stroke="#1e2126" stroke-width=".9"/><circle cx="107.5" cy="772.9" r="1.6" fill="#fff" stroke="#1e2126" stroke-width=".9"/><circle cx="97.5" cy="772.9" r="1.6" fill="#fff" stroke="#1e2126" stroke-width=".9"/><circle cx="94.4" cy="763.4" r="1.6" fill="#fff" stroke="#1e2126" stroke-width=".9"/>
<path d="M121.5,765.3 H138.8" stroke="#1e2126" stroke-width="1.3"/>
<path d="M157.2,756.8 V773.8" stroke="#1e2126" stroke-width="1.3"/>
<rect x="26" y="785.6" width="152" height="1" fill="#e3e5e8"/>
<path d="M39.6,802.3 H45 L42.3,806.3 Z" fill="#6c717a"/>
<text x="50.7" y="808.3" font-size="11" fill="#4a4f57" font-weight="normal" textLength="80.1" lengthAdjust="spacingAndGlyphs" >My saved shapes</text>
<path d="M157.6,802.0 L162.8,807.3 M162.8,802.0 L157.6,807.3" stroke="#3a3e45" stroke-width="1.1"/>
<path d="M35.5,831.7 V822.5 H169.5 V831.7" fill="none" stroke="#9a9ea5" stroke-width="1" stroke-dasharray="4.5,3"/>
<rect x="88" y="828.5" width="26" height="6" rx="3" fill="#e6e8eb"/>
<rect x="26" y="831.7" width="152" height="38.3" fill="#f9fafb"/><rect x="26" y="831.2" width="152" height="1" fill="#e8eaed"/>
<rect x="46" y="842" width="113" height="22.8" rx="3" fill="#2f6ee0"/>
<path d="M62,853.5 H72 M67,848.5 V858.5" stroke="#fff" stroke-width="1.3"/>
<text x="78.6" y="857.5" font-size="11" fill="#ffffff" font-weight="bold" textLength="67.9" lengthAdjust="spacingAndGlyphs" >Shape Library</text>
<path d="M1146,843.5 H1160 V870 H1146 Z" fill="#ffffff"/><path d="M1146,844 H1153.6 Q1159.2,846 1159.6,858 V870 H1146 Z" fill="#f9fafb"/><path d="M1146,844.5 H1153.6" stroke="#e3e5e8"/>
<path d="M938.6,845 V870 M971.7,845 V870 M1004.4,845 V870 M1127.3,845 V870" stroke="#e3e5e8"/>
<g fill="none" stroke="#3a3e45" stroke-width="1" stroke-linejoin="round"><path d="M954.7,850.8 L962,854.5 L954.7,858.2 L947.4,854.5 Z"/><path d="M947.4,857.5 L954.7,861.2 L962,857.5 M947.4,860.5 L954.7,864.2 L962,860.5"/></g>
<circle cx="987.5" cy="857.5" r="7.2" fill="none" stroke="#3a3e45" stroke-width="1"/><path d="M984,862 L987.5,852.5 L991,862 L987.5,859.5 Z" fill="none" stroke="#3a3e45" stroke-width="1" stroke-linejoin="round"/>
<path d="M1015.3,857.5 H1026.5" stroke="#3a3e45" stroke-width="1.3"/>
<text x="1044.8" y="861.8" font-size="11.5" fill="#3a3e45" font-weight="normal" textLength="22.2" lengthAdjust="spacingAndGlyphs" >75%</text>
<path d="M1082,855 H1088 L1085,859.7 Z" fill="#2c3036"/>
<path d="M1105.3,857.7 H1116.5 M1110.9,852 V863.5" stroke="#3a3e45" stroke-width="1.3"/>
<path d="M1137.8,851.8 L1142,856 M1150.2,851.8 L1146,856 M1137.8,863.8 L1142,859.6 M1150.2,863.8 L1146,859.6" stroke="#3a3e45" stroke-width="1"/><path d="M1136.6,850.6 H1140.6 L1136.6,854.6 Z M1151.4,850.6 H1147.4 L1151.4,854.6 Z M1136.6,865 H1140.6 L1136.6,861 Z M1151.4,865 H1147.4 L1151.4,861 Z" fill="#2c3036"/>
</svg>

</body></html>
